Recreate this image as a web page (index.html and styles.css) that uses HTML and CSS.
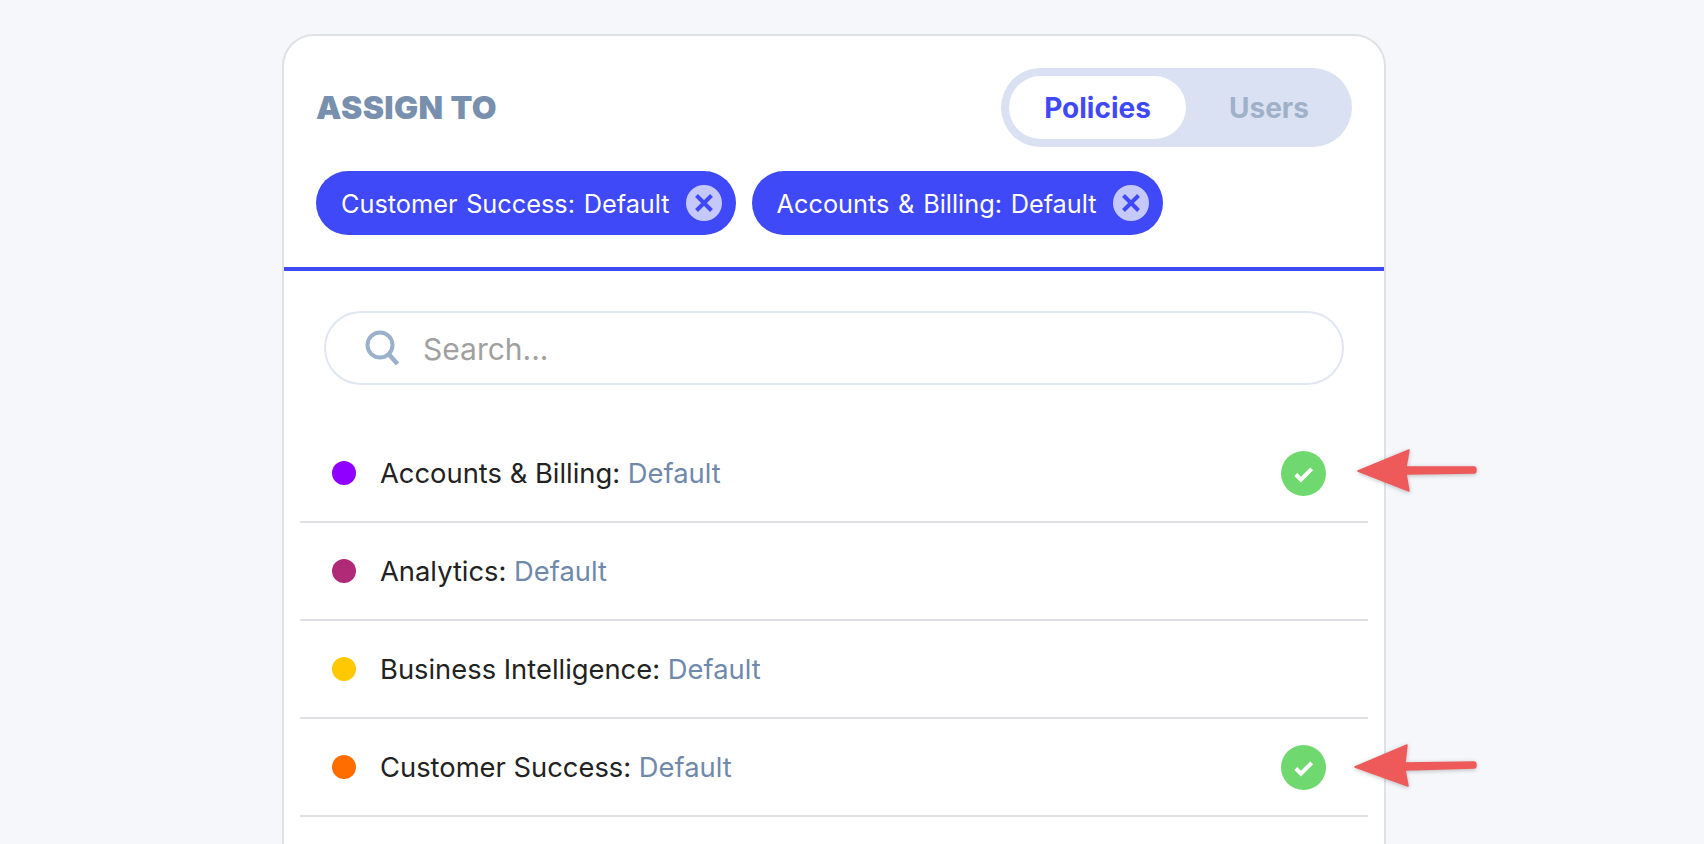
FILE: index.html
```html
<!DOCTYPE html>
<html lang="en">
<head>
<meta charset="utf-8">
<title>Assign to</title>
<link rel="stylesheet" href="styles.css">
</head>
<body>
<main class="card">
  <header class="head">
    <div class="head-top">
      <h2 class="title">ASSIGN TO</h2>
      <div class="toggle">
        <span class="toggle-item is-active">Policies</span>
        <span class="toggle-item toggle-rest">Users</span>
      </div>
    </div>
    <div class="tags">
      <span class="tag">Customer Success: Default
        <span class="tag-x"><svg viewBox="0 0 36 36" width="36" height="36"><path d="M10.5 10.5l15 15M25.500 10.500l-15 15" fill="none" stroke="#4049f7" stroke-width="4"/></svg></span>
      </span>
      <span class="tag">Accounts &amp; Billing: Default
        <span class="tag-x"><svg viewBox="0 0 36 36" width="36" height="36"><path d="M10.5 10.5l15 15M25.500 10.500l-15 15" fill="none" stroke="#4049f7" stroke-width="4"/></svg></span>
      </span>
    </div>
  </header>
  <div class="search">
    <svg class="search-icon" viewBox="0 0 34 36" width="34" height="36"><circle cx="15" cy="15" r="12.500" fill="none" stroke="#9bb0cb" stroke-width="4"/><path d="M24 24.500L32.500 34" fill="none" stroke="#9bb0cb" stroke-width="4.500"/></svg>
    <span class="placeholder">Search...</span>
  </div>
  <ul class="list">
    <li class="row"><span class="dot dot-purple"></span><span class="name">Accounts &amp; Billing: <span class="muted">Default</span></span>
      <span class="check"><svg viewBox="0 0 44 44" width="45" height="45"><path d="M14.500 23l5 5 10.500-10.500" fill="none" stroke="#fff" stroke-width="4"/></svg></span></li>
    <li class="row"><span class="dot dot-magenta"></span><span class="name">Analytics: <span class="muted">Default</span></span></li>
    <li class="row"><span class="dot dot-yellow"></span><span class="name">Business Intelligence: <span class="muted">Default</span></span></li>
    <li class="row"><span class="dot dot-orange"></span><span class="name">Customer Success: <span class="muted">Default</span></span>
      <span class="check"><svg viewBox="0 0 44 44" width="45" height="45"><path d="M14.500 23l5 5 10.500-10.500" fill="none" stroke="#fff" stroke-width="4"/></svg></span></li>
  </ul>
</main>
<svg class="arrows" viewBox="0 0 1704 844" width="1704" height="844">
  <path class="arrow" d="M1358 471L1409 450 1406 467 1474 467Q1476 467 1476 470 1476 473 1474 473L1406 474 1409 491Z"/>
  <path class="arrow" d="M1355 767L1407 745 1405 763 1474 762Q1476 762 1476 765 1476 768 1474 768L1405 770 1408 786Z"/>
</svg>
</body>
</html>
```
FILE: styles.css
```css
html, body {
  margin: 0;
  height: 844px;
  overflow: hidden;
}
body {
  position: relative;
  background: #f5f7fb;
  font-family: Inter, "Liberation Sans", sans-serif;
  padding: 34px 0 0 282px;
  box-sizing: border-box;
}
.card {
  width: 1104px;
  height: 810px;
  box-sizing: border-box;
  background: #fff;
  border: 2px solid #e0e1e4;
  border-bottom: 0;
  border-radius: 32px 32px 0 0;
}
.head {
  padding: 32px 32px 32px;
  border-bottom: 4px solid #4049f7;
}
.head-top {
  display: flex;
  align-items: center;
  justify-content: space-between;
}
.title {
  margin: 0;
  font-size: 32px;
  font-weight: 900;
  letter-spacing: 0.4px;
  color: #7890ad;
}
.toggle {
  display: flex;
  width: 351px;
  height: 79px;
  box-sizing: border-box;
  padding: 8px;
  border-radius: 40px;
  background: #dae1f2;
}
.toggle-item {
  display: flex;
  align-items: center;
  justify-content: center;
  flex: 1;
  padding-top: 1px;
  font-size: 28px;
  font-weight: 700;
  color: #9fb1c9;
  border-radius: 32px;
}
.toggle-rest { padding-left: 8px; }
.toggle-item.is-active {
  flex: 0 0 177px;
  background: #fff;
  color: #4049f7;
}
.tags {
  display: flex;
  gap: 16px;
  margin-top: 24px;
}
.tag {
  display: flex;
  align-items: center;
  gap: 16px;
  height: 64px;
  padding: 0 14px 0 25px;
  border-radius: 32px;
  background: #4049f7;
  color: #fff;
  font-size: 25.300px;
  word-spacing: 1.600px;
}
.tag-x {
  display: block;
  width: 36px;
  height: 36px;
  border-radius: 50%;
  background: #c5c8fb;
}
.tag-x svg { display: block; }
.search {
  display: flex;
  align-items: center;
  gap: 24px;
  height: 74px;
  box-sizing: border-box;
  margin: 40px 40px 0;
  padding: 0 0 0 39px;
  border: 2px solid #e0e6f2;
  border-radius: 37px;
}
.search-icon { flex: none; }
.placeholder {
  padding-top: 2px;
  font-size: 30px;
  color: #a0a0a0;
}
.list {
  list-style: none;
  margin: 40px 16px 0;
  padding: 0;
}
.row {
  display: flex;
  align-items: center;
  height: 98px;
  box-sizing: border-box;
  padding: 0 42px 0 32px;
  border-bottom: 2px solid #e0e1e4;
  font-size: 27.350px;
  color: #222;
}
.name { padding-top: 1px; }
.dot {
  flex: none;
  width: 24px;
  height: 24px;
  border-radius: 50%;
  margin-right: 24px;
}
.dot-purple { background: #9000ff; }
.dot-magenta { background: #b02a78; }
.dot-yellow { background: #ffc800; }
.dot-orange { background: #ff6d00; }
.muted { color: #7089ab; }
.check {
  margin-left: auto;
  margin-top: 1px;
  width: 45px;
  height: 45px;
  border-radius: 50%;
  background: #6fd86f;
}
.check svg { display: block; }
.arrows {
  position: absolute;
  left: 0;
  top: 0;
  pointer-events: none;
}
.arrow {
  fill: #ee5a5a;
  stroke: #ee5a5a;
  stroke-width: 1.500;
  stroke-linejoin: round;
  filter: drop-shadow(0 1px 2px rgba(0,0,0,.25));
}
```
